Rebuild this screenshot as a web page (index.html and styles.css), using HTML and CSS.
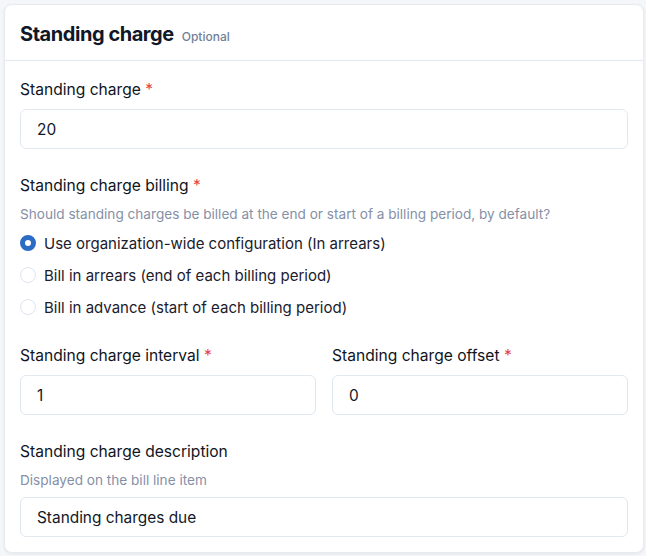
FILE: index.html
```html
<!DOCTYPE html>
<html>
<head>
<meta charset="utf-8">
<link rel="stylesheet" href="styles.css">
</head>
<body>
<div class="card">
  <div class="card-header">
    <h2 class="title">Standing charge</h2>
    <span class="optional">Optional</span>
  </div>
  <div class="card-body">
    <div class="field">
      <label class="label">Standing charge <span class="req">*</span></label>
      <div class="input">20</div>
    </div>
    <div class="field">
      <label class="label">Standing charge billing <span class="req">*</span></label>
      <p class="help">Should standing charges be billed at the end or start of a billing period, by default?</p>
      <div class="radios">
        <div class="radio-row"><span class="radio checked"></span><span>Use organization-wide configuration (In arrears)</span></div>
        <div class="radio-row"><span class="radio"></span><span>Bill in arrears (end of each billing period)</span></div>
        <div class="radio-row"><span class="radio"></span><span>Bill in advance (start of each billing period)</span></div>
      </div>
    </div>
    <div class="field row">
      <div class="col">
        <label class="label">Standing charge interval <span class="req">*</span></label>
        <div class="input">1</div>
      </div>
      <div class="col">
        <label class="label">Standing charge offset <span class="req">*</span></label>
        <div class="input">0</div>
      </div>
    </div>
    <div class="field">
      <label class="label">Standing charge description</label>
      <p class="help help-desc">Displayed on the bill line item</p>
      <div class="input">Standing charges due</div>
    </div>
  </div>
</div>
</body>
</html>
```

FILE: styles.css
```css
html, body {
  margin: 0;
  padding: 0;
}
body {
  background: #f4f6f9;
  font-family: Inter, "Noto Sans", sans-serif;
  color: #1a202c;
  padding: 4px 2px 4px 4px;
}
.card {
  background: #fff;
  border: 1px solid #e8ecf1;
  border-radius: 8px;
  box-shadow: 0 1px 3px rgba(20, 30, 50, 0.08);
  height: 549px;
  box-sizing: border-box;
}
.card-header {
  display: flex;
  align-items: baseline;
  gap: 8px;
  padding: 17px 15px 14px 15px;
  border-bottom: 1px solid #e2e8f0;
}
.title {
  margin: 0;
  font-size: 20px;
  font-weight: 700;
  line-height: 24px;
  color: #0f1729;
  letter-spacing: -0.45px;
}
.optional {
  font-size: 12px;
  font-weight: 500;
  color: #718096;
}
.card-body {
  padding: 19px 15px 16px 15px;
}
.field {
  margin-bottom: 27px;
}
.field.row {
  margin-bottom: 27px;
}
.field:last-child {
  margin-bottom: 0;
}
.label {
  display: block;
  font-size: 15.6px;
  line-height: 20px;
  font-weight: 400;
  color: #0f1522;
  margin-bottom: 9px;
}
.req {
  color: #e53e3e;
}
.help {
  margin: 1px 0 8px;
  font-size: 13.6px;
  line-height: 18px;
  color: #8590a6;
}
.help-desc {
  margin-top: 1px;
  margin-bottom: 8px;
}
.input {
  height: 40px;
  box-sizing: border-box;
  border: 1px solid #e2e8f0;
  border-radius: 6px;
  padding: 0 16px;
  display: flex;
  align-items: center;
  font-size: 15.4px;
  color: #111827;
}
.radios {
  display: flex;
  flex-direction: column;
  gap: 8px;
}
.radio-row {
  display: flex;
  align-items: center;
  gap: 8px;
  height: 24px;
  font-size: 15px;
  color: #1a202c;
}
.radio {
  width: 16px;
  height: 16px;
  box-sizing: border-box;
  border-radius: 50%;
  border: 1px solid #dfe5ee;
  background: #fff;
  flex: none;
}
.radio.checked {
  border: 5px solid #2b6cc4;
  background: #fff;
}
.row {
  display: flex;
  gap: 16px;
}
.col {
  flex: 1;
}
```
